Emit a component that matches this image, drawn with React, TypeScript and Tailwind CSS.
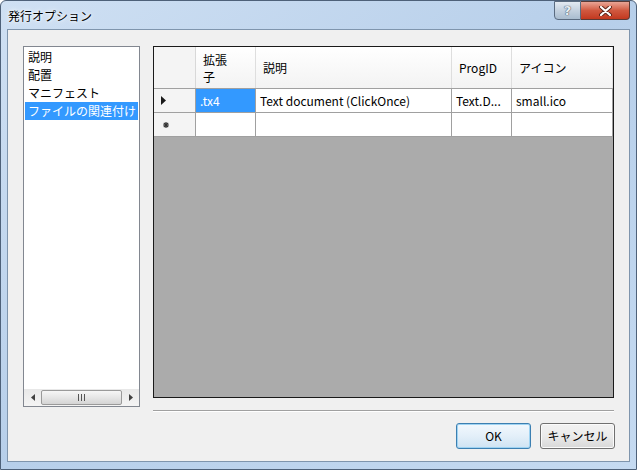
import React from 'react';

const listItems = ['説明', '配置', 'マニフェスト', 'ファイルの関連付け'];

const font = { fontFamily: '"Noto Sans CJK JP", "Noto Sans", sans-serif' };

const TitleButtons = () => (
  <div className="flex h-[19px] mr-[6px]">
    <div className="w-[27px] h-[19px] border border-[#5a6b80] rounded-bl-[4px] bg-gradient-to-b from-[#e3eaf2] via-[#c4d1df] to-[#a9bccf] flex items-center justify-center">
      <span className="text-[13px] font-bold text-[#e8edf3] [text-shadow:0_0_1px_#3a4a5e,0_0_1px_#3a4a5e]" style={{ fontFamily: '"DejaVu Sans", sans-serif' }}>?</span>
    </div>
    <div className="w-[49px] h-[19px] border border-l-0 border-[#5a3a35] rounded-br-[4px] bg-gradient-to-b from-[#e8a596] via-[#d0583f] to-[#c2381e] flex items-center justify-center">
      <svg width="13" height="10" viewBox="0 0 13 10">
        <path d="M2 1 L11 9 M11 1 L2 9" stroke="#5a2418" strokeWidth="4" strokeLinecap="round" />
        <path d="M2 1 L11 9 M11 1 L2 9" stroke="#ffffff" strokeWidth="2.2" strokeLinecap="round" />
      </svg>
    </div>
  </div>
);

const ListBox = () => (
  <div className="w-[117px] h-[361px] border border-[#828790] bg-white flex flex-col shrink-0">
    <div className="flex-1 pt-[1px]">
      {listItems.map((item, i) => (
        <div
          key={item}
          className={
            'h-[18px] leading-[18px] text-[12px] pl-[3px] ml-[1px] mr-[1px] whitespace-nowrap ' +
            (i === 3 ? 'bg-[#3399ff] text-white' : 'text-black')
          }
        >
          {item}
        </div>
      ))}
    </div>
    {/* horizontal scrollbar */}
    <div className="h-[17px] bg-gradient-to-b from-[#e8e8e8] to-[#f4f4f4] flex items-center">
      <div className="w-[17px] h-full flex items-center justify-center">
        <svg width="4" height="7" viewBox="0 0 4 7"><path d="M4 0 L0 3.5 L4 7 Z" fill="#404040" /></svg>
      </div>
      <div className="flex-1 h-[15px] border border-[#9a9a9a] rounded-[2px] bg-gradient-to-b from-[#f6f6f6] via-[#e6e6e6] to-[#d4d4d4] flex items-center justify-center gap-[2px]">
        <div className="w-[1px] h-[7px] bg-[#555]" />
        <div className="w-[1px] h-[7px] bg-[#555]" />
        <div className="w-[1px] h-[7px] bg-[#555]" />
      </div>
      <div className="w-[17px] h-full flex items-center justify-center">
        <svg width="4" height="7" viewBox="0 0 4 7"><path d="M0 0 L4 3.5 L0 7 Z" fill="#404040" /></svg>
      </div>
    </div>
  </div>
);

const cols = [
  { w: 'w-[60px]', head: ['拡張', '子'] },
  { w: 'w-[196px]', head: ['説明'] },
  { w: 'w-[60px]', head: ['ProgID'] },
  { w: 'w-[101px]', head: ['アイコン'] },
];

const row1 = ['.tx4', 'Text document (ClickOnce)', 'Text.D...', 'small.ico'];

const Grid = () => (
  <div className="w-[461px] h-[352px] border border-[#1a1a1a] bg-[#ababab] flex flex-col">
    {/* header */}
    <div className="flex h-[42px] bg-gradient-to-b from-[#ffffff] to-[#f3f3f3] border-b border-[#a0a0a0]">
      <div className="w-[42px] border-r border-[#d8d8d8] bg-[#f4f4f4]" />
      {cols.map((c, i) => (
        <div
          key={i}
          className={c.w + ' border-r border-[#dedede] flex flex-col justify-center pl-[7px] text-[12px] leading-[17px] text-black'}
        >
          {c.head.map((h) => (
            <span key={h}>{h}</span>
          ))}
        </div>
      ))}
    </div>
    {/* row 1 */}
    <div className="flex h-[24px] border-b border-[#a0a0a0] bg-white">
      <div className="w-[42px] bg-[#f4f4f4] border-r border-[#a0a0a0] flex items-center pl-[7px]">
        <svg width="5" height="9" viewBox="0 0 5 9"><path d="M0 0 L5 4.5 L0 9 Z" fill="#1a1a1a" /></svg>
      </div>
      {cols.map((c, i) => (
        <div
          key={i}
          className={
            c.w +
            ' border-r border-[#a0a0a0] flex items-center pl-[4px] text-[12px] whitespace-nowrap overflow-hidden ' +
            (i === 0 ? 'bg-[#3399ff] text-white' : 'text-black')
          }
        >
          {row1[i]}
        </div>
      ))}
    </div>
    {/* new row */}
    <div className="flex h-[24px] border-b border-[#a0a0a0] bg-white">
      <div className="w-[42px] bg-[#f4f4f4] border-r border-[#a0a0a0] flex items-center pl-[9px]">
        <svg width="6" height="6" viewBox="0 0 6 6">
          <path d="M3 0 V6 M0 3 H6 M0.8 0.8 L5.2 5.2 M5.2 0.8 L0.8 5.2" stroke="#333" strokeWidth="1.2" />
        </svg>
      </div>
      {cols.map((c, i) => (
        <div key={i} className={c.w + ' border-r border-[#a0a0a0]'} />
      ))}
    </div>
  </div>
);

export default function App() {
  return (
    <div
      className="w-[637px] h-[470px] flex flex-col bg-gradient-to-br from-[#cfe0f3] via-[#b7cfea] to-[#c5daf1] border border-[#4e6179] rounded-t-[6px] overflow-hidden"
      style={font}
    >
      {/* title bar */}
      <div className="h-[28px] flex justify-between items-start shrink-0">
        <div className="pl-[7px] pt-[6px] text-[12px] text-black [text-shadow:0_0_6px_#ffffff,0_0_3px_#ffffff]">
          発行オプション
        </div>
        <TitleButtons />
      </div>
      {/* client area */}
      <div className="flex-1 mx-[6px] mb-[7px] border border-[#7f95ad] bg-[#f0f0f0] pl-[15px] pr-[13px] pt-[16px] flex gap-[13px]">
        <ListBox />
        <div className="w-[462px] flex flex-col">
          <Grid />
          <div className="mt-[12px] w-[461px] border-t border-[#a0a0a0] border-b border-b-white" />
          <div className="mt-[11px] flex justify-end gap-[9px]">
            <button className="w-[75px] h-[26px] rounded-[3px] border border-[#3c7fb1] bg-gradient-to-b from-[#f2f8fd] via-[#e3eff9] to-[#cfe3f3] text-[12px] text-black shadow-[inset_0_0_0_1px_#9fd3f2]">
              OK
            </button>
            <button className="w-[75px] h-[26px] rounded-[3px] border border-[#707070] bg-gradient-to-b from-[#f2f2f2] via-[#ebebeb] to-[#d8d8d8] text-[12px] text-black shadow-[inset_0_0_0_1px_#fbfbfb]">
              キャンセル
            </button>
          </div>
        </div>
      </div>
    </div>
  );
}
